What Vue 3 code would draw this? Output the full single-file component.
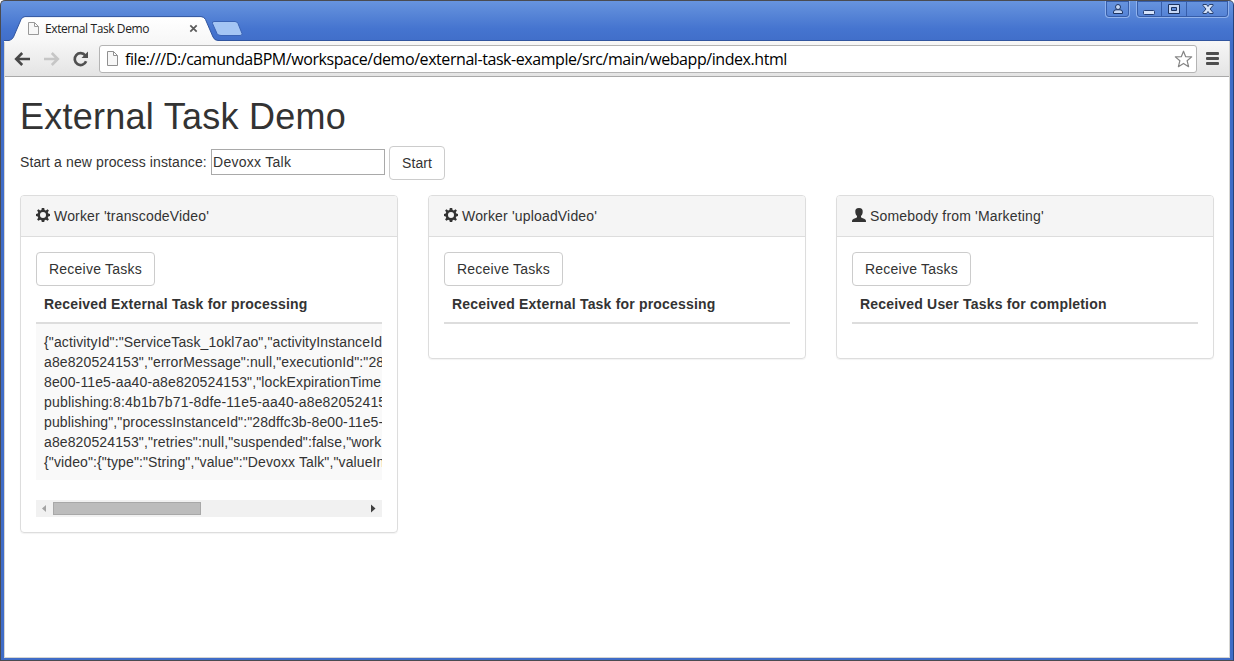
<script setup>
const panels = [
  {
    icon: 'cog',
    title: "Worker 'transcodeVideo'",
    heading: 'Received External Task for processing',
    lines: [
      '{"activityId":"ServiceTask_1okl7ao","activityInstanceId',
      'a8e820524153","errorMessage":null,"executionId":"28',
      '8e00-11e5-aa40-a8e820524153","lockExpirationTime',
      'publishing:8:4b1b7b71-8dfe-11e5-aa40-a8e82052415',
      'publishing","processInstanceId":"28dffc3b-8e00-11e5-',
      'a8e820524153","retries":null,"suspended":false,"work',
      '{"video":{"type":"String","value":"Devoxx Talk","valueIn',
    ],
  },
  { icon: 'cog', title: "Worker 'uploadVideo'", heading: 'Received External Task for processing', lines: [] },
  { icon: 'user', title: "Somebody from 'Marketing'", heading: 'Received User Tasks for completion', lines: [] },
]
</script>

<template>
  <div class="window">
    <header class="titlebar">
      <div class="tab">
        <svg class="tab-shape" width="1226" height="26" viewBox="0 0 1226 26">
          <defs>
            <linearGradient id="tabfill" x1="0" y1="0" x2="0" y2="1">
              <stop offset="0" stop-color="#fff" />
              <stop offset="1" stop-color="#f7f7f7" />
            </linearGradient>
          </defs>
          <path d="M0 26V24.500H5Q8 24 9.500 21L17 3.500Q18.500 .8 21 .8H197Q200 .8 201.500 3.500L209 21Q210.500 24.500 214 24.500V26Z" fill="url(#tabfill)" />
          <path d="M0 24.500H5Q8 24 9.500 21L17 3.500Q18.500 .6 21 .6H197Q200 .6 201.500 3.500L209 21Q210.500 24.500 214 24.500H1226" fill="none" stroke="#31559f" stroke-width="1" />
          <path d="M210 5.500H231Q233 5.500 234 7.500L238 17.500Q238.500 19.500 236 19.500H217Q214 19.500 213 17.500L208.500 7.500Q208 5.500 210 5.500Z" fill="#a4c5f4" stroke="#3a63b5" />
        </svg>
        <svg class="page-icon" width="12" height="15" viewBox="0 0 12 15"><path d="M1.500 1.500H7.500L11.500 5.500V13.500H1.500ZM7.500 1.500V5.500H11.500" fill="#f7f7f7" stroke="#999" /></svg>
        <span class="tab-title">External Task Demo</span>
        <svg class="tab-close" width="9" height="9" viewBox="0 0 9 9"><path d="M1.300 1.300L7.700 7.700M7.700 1.300L1.300 7.700" stroke="#5a5a5a" stroke-width="1.700" /></svg>
      </div>
      <div class="controls">
        <span class="control profile">
          <svg width="12" height="12" viewBox="0 0 12 12"><path d="M1.500 10.500V9Q1.500 7 4 6.800H8Q10.500 7 10.500 9V10.500Z" fill="#c6d8f6" stroke="#1d3461" /><circle cx="6" cy="4" r="2.500" fill="#c6d8f6" stroke="#1d3461" /></svg>
        </span>
        <div class="control-group">
          <span class="control minimize"><svg width="12" height="12" viewBox="0 0 12 12"><rect x=".5" y="7.500" width="11" height="4" rx="1" fill="#d5e3fa" stroke="#243f76" /></svg></span>
          <span class="control maximize"><svg width="12" height="12" viewBox="0 0 12 12"><path d="M.5 1.500H11.500V10.500H.5ZM3.500 4.500V7.500H8.500V4.500Z" fill="#c6d8f6" fill-rule="evenodd" stroke="#1d3461" /></svg></span>
          <span class="control close"><svg width="12" height="12" viewBox="0 0 12 12"><path d="M1 1.500H4.500L6 3.500L7.500 1.500H11V2.500L8 6L11 9.500V10.500H7.500L6 8.500L4.500 10.500H1V9.500L4 6L1 2.500Z" fill="#d5e3fa" stroke="#1d3461" stroke-width=".9" /></svg></span>
        </div>
      </div>
    </header>

    <div class="frame">
      <nav class="toolbar">
        <svg class="nav-buttons" width="80" height="20" viewBox="0 0 80 20">
          <path d="M17 10H3.500M9.200 4L3.200 10L9.200 16" fill="none" stroke="#484848" stroke-width="2.600" />
          <path d="M31 10H44.500M38.800 4L44.800 10L38.800 16" fill="none" stroke="#c6c6c6" stroke-width="2.600" />
          <path d="M72.300 6.500A5.900 5.900 0 1 0 73.100 12.300" fill="none" stroke="#505050" stroke-width="2.700" />
          <path d="M75 2.500V9H68.500Z" fill="#505050" />
        </svg>
        <div class="omnibox">
          <svg class="page-icon" width="13" height="15" viewBox="0 0 13 15"><path d="M1.500 .5H7.500L11.500 4.500V14.500H1.500ZM7.500 .5V4.500H11.500" fill="#f7f7f7" stroke="#909090" /></svg>
          <span class="url">file:///D:/camundaBPM/workspace/demo/external-task-example/src/main/webapp/index.html</span>
          <svg class="star" width="19" height="18" viewBox="0 0 19 18"><path d="M9.500 1.200L11.700 6.700L17.700 6.900L13.100 10.700L14.600 16.700L9.500 13.400L4.400 16.700L5.900 10.700L1.300 6.900L7.300 6.700Z" fill="#fff" stroke="#858585" stroke-width="1.200" stroke-linejoin="round" /></svg>
        </div>
        <span class="menu"><i></i><i></i><i></i></span>
      </nav>

      <main class="page">
        <h1>External Task Demo</h1>
        <div class="start-row">
          <label for="process">Start a new process instance:</label>
          <input id="process" type="text" value="Devoxx Talk" />
          <button class="btn start">Start</button>
        </div>
        <div class="columns">
          <section v-for="panel in panels" :key="panel.title" class="panel">
            <div class="panel-heading">
              <svg v-if="panel.icon === 'cog'" class="icon" width="14" height="14" viewBox="0 0 14 14">
                <path fill="#333" fill-rule="evenodd" d="M5.800 0H8.200L8.600 1.900L9.900 2.400L11.500 1.200L12.900 2.600L11.800 4.200L12.300 5.500L14 5.900V8.100L12.300 8.500L11.800 9.800L12.900 11.400L11.500 12.800L9.900 11.700L8.600 12.200L8.200 14H5.800L5.400 12.200L4.100 11.700L2.500 12.800L1.100 11.400L2.200 9.800L1.700 8.500L0 8.100V5.900L1.700 5.500L2.200 4.200L1.100 2.600L2.500 1.200L4.100 2.400L5.400 1.900ZM7 4A3 3 0 1 0 7 10A3 3 0 1 0 7 4Z" />
              </svg>
              <svg v-else class="icon" width="14" height="14" viewBox="0 0 14 14">
                <path fill="#333" d="M7 0C9.800 0 10.900 1.500 10.700 4C10.600 6 9.900 7.200 9 8V9.300C9.400 10.200 12 10.600 13.300 11.500C13.900 12 14 13 14 14H0C0 13 .1 12 .7 11.500C2 10.600 4.600 10.200 5 9.300V8C4.100 7.200 3.400 6 3.300 4C3.100 1.500 4.200 0 7 0Z" />
              </svg>
              <span>{{ panel.title }}</span>
            </div>
            <div class="panel-body">
              <button class="btn receive">Receive Tasks</button>
              <div class="task-table" :class="{ empty: !panel.lines.length }">
                <div class="table-head">{{ panel.heading }}</div>
                <div v-if="panel.lines.length" class="table-cell">
                  <div v-for="(line, i) in panel.lines" :key="i" class="line">{{ line }}</div>
                </div>
              </div>
              <div v-if="panel.lines.length" class="scrollbar">
                <svg width="17" height="17" viewBox="0 0 17 17"><path d="M10 5V12L6 8.500Z" fill="#a3a3a3" /></svg>
                <div class="track"><div class="thumb"></div></div>
                <svg width="17" height="17" viewBox="0 0 17 17"><path d="M6 4.500V12.500L10.500 8.500Z" fill="#404040" /></svg>
              </div>
            </div>
          </section>
        </div>
      </main>
    </div>
  </div>
</template>

<style>
body { margin: 0; overflow: hidden; }
</style>

<style scoped>
* { box-sizing: border-box; }
svg { display: block; flex: none; }
.window {
  width: 1234px; height: 661px; display: flex; flex-direction: column;
  background: linear-gradient(#6794de 0, #4574cf 28px, #3f6cc7 45px, #3f6cc7);
  border: 1px solid #4a4b50; border-right-color: #25437c; border-radius: 5px 5px 0 0;
  padding: 0 3px 2px;
  font-family: "Liberation Sans", Arial, sans-serif; font-size: 14px; line-height: 20px; color: #333;
}
.titlebar { height: 40px; flex: none; display: flex; justify-content: space-between; }
.tab { position: relative; width: 250px; display: flex; align-items: center; height: 25px; margin-top: 15px; padding-left: 23px; }
.tab-shape { position: absolute; left: 0; top: 0; }
.tab .page-icon, .tab-title, .tab-close { position: relative; }
.tab-title { font: 12px/16px "Open Sans", sans-serif; color: #222; width: 144px; margin-left: 6px; white-space: nowrap; letter-spacing: -.4px; }
.controls { display: flex; height: 17px; gap: 6px; margin-right: 1px; }
.control { display: flex; justify-content: center; align-items: center; height: 17px; }
.profile, .control-group { border: 1px solid #90b2ec; border-top: 0; border-radius: 0 0 4px 4px; box-shadow: inset 0 0 0 1px #365da9; }
.profile { width: 25px; }
.control-group { display: flex; height: 17px; }
.control-group .control { height: 15px; }
.minimize, .maximize { width: 25px; border-right: 1px solid #365da9; }
.close { width: 41px; }
.frame { flex: 1; min-height: 0; display: flex; flex-direction: column; border: 1px solid #d5d5d2; border-top: 0; background: #fff; }
.toolbar { position: relative; height: 36px; flex: none; display: flex; align-items: center; background: linear-gradient(#f7f7f7, #e4e4e4); border-bottom: 1px solid #a9a9a9; padding: 0 9px 0 8px; }
.omnibox { display: flex; align-items: center; width: 1098px; height: 28px; margin-left: 6px; padding: 0 3px 0 6px; background: #fff; border: 1px solid #b4b4b4; border-radius: 3px; }
.url { flex: 1; margin-left: 6px; font: 16px/20px "Open Sans", sans-serif; letter-spacing: -.435px; color: #000; white-space: nowrap; }
.menu { display: flex; flex-direction: column; gap: 2px; margin-left: 9px; }
.menu i { width: 13px; height: 3px; border-radius: 1px; background: #4e4e4e; }
.page { padding: 0 15px; }
h1 { margin: 20px 0 9px; font-size: 36px; line-height: 40px; font-weight: 400; white-space: nowrap; letter-spacing: .25px; }
.start-row { display: flex; align-items: center; height: 34px; }
label { width: 191px; white-space: nowrap; position: relative; top: -1px; letter-spacing: .11px; }
input { width: 174px; height: 26px; margin: -2px 4px 0 0; padding: 1px; border: 1px solid #a9a9a9; font: inherit; color: inherit; letter-spacing: .27px; }
.btn { display: block; height: 34px; padding: 0; font: inherit; color: #333; background: #fff; border: 1px solid #ccc; border-radius: 4px; white-space: nowrap; }
.start { width: 56px; letter-spacing: .1px; }
.receive { width: 119px; letter-spacing: .23px; }
.columns { display: grid; grid-template-columns: repeat(3, 378px); gap: 30px; align-items: start; margin-top: 15px; }
.panel { min-width: 0; border: 1px solid #ddd; border-radius: 4px; box-shadow: 0 1px 1px rgba(0, 0, 0, .05); }
.panel-heading { display: flex; gap: 4px; height: 41px; padding: 10px 15px; background: #f5f5f5; border-bottom: 1px solid #ddd; border-radius: 3px 3px 0 0; letter-spacing: .17px; }
.icon { margin-top: 2px; }
.panel-body { padding: 15px; }
.task-table { overflow: hidden; margin-bottom: 20px; }
.task-table.empty { margin-bottom: 19px; }
.table-head { padding: 8px; border-bottom: 2px solid #ddd; font-weight: 700; white-space: nowrap; letter-spacing: .19px; }
.table-cell { padding: 8px; background: #f9f9f9; }
.line { white-space: nowrap; letter-spacing: .12px; }
.line:nth-child(4) { letter-spacing: .18px; }
.scrollbar { display: flex; height: 17px; background: #f1f1f1; }
.track { flex: 1; padding: 2px 0; }
.thumb { width: 148px; height: 13px; background: #bcbcbc; border: 1px solid #a8a8a8; }
</style>
